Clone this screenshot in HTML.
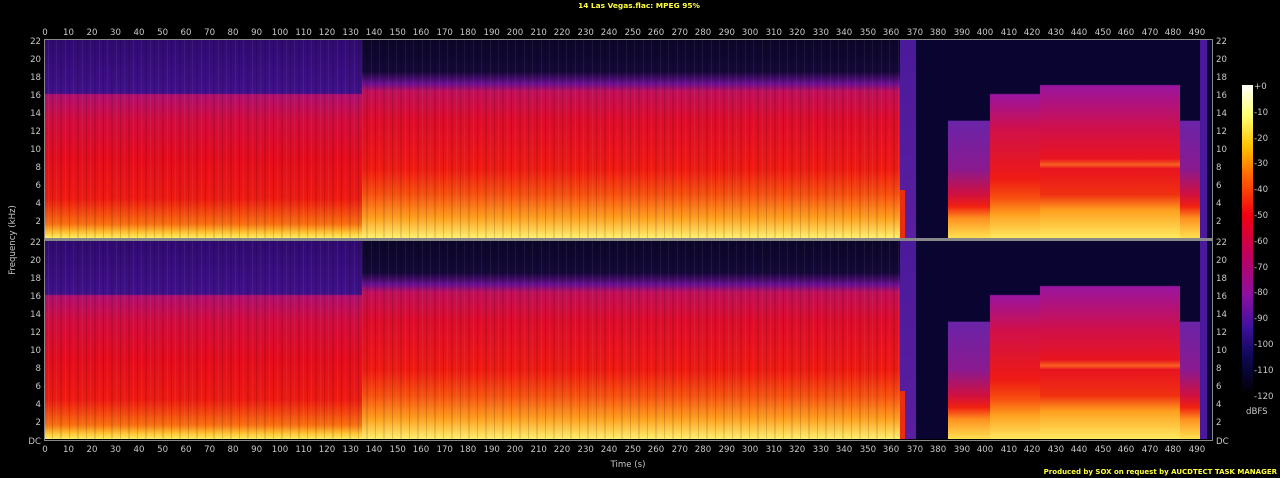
<!DOCTYPE html>
<html><head><meta charset="utf-8"><style>
html,body{margin:0;padding:0;background:#000;width:1280px;height:478px;overflow:hidden}
svg{display:block}
text{font-family:"DejaVu Sans","Liberation Sans",sans-serif;font-size:8.6px;fill:#c8c8c8}
</style></head><body>
<svg width="1280" height="478" viewBox="0 0 1280 478" xmlns="http://www.w3.org/2000/svg">
<defs>
<linearGradient id="gA" x1="0" y1="0" x2="0" y2="1">
<stop offset="0" stop-color="#300a70"/><stop offset="0.27" stop-color="#40108a"/>
<stop offset="0.275" stop-color="#b01070"/><stop offset="0.4" stop-color="#d00c40"/>
<stop offset="0.6" stop-color="#e40c1c"/><stop offset="0.8" stop-color="#ec1a12"/>
<stop offset="0.86" stop-color="#f24010"/><stop offset="0.93" stop-color="#f87010"/>
<stop offset="0.97" stop-color="#ffc030"/><stop offset="1" stop-color="#ffee60"/></linearGradient>
<linearGradient id="gB" x1="0" y1="0" x2="0" y2="1">
<stop offset="0" stop-color="#0c0628"/><stop offset="0.16" stop-color="#140838"/>
<stop offset="0.22" stop-color="#6a1090"/><stop offset="0.26" stop-color="#c0105a"/>
<stop offset="0.4" stop-color="#dc0c2c"/><stop offset="0.65" stop-color="#ee1a12"/>
<stop offset="0.78" stop-color="#f65010"/><stop offset="0.9" stop-color="#ffa020"/>
<stop offset="1" stop-color="#fff070"/></linearGradient>
<linearGradient id="gC" x1="0" y1="0" x2="0" y2="1">
<stop offset="0" stop-color="#4a1a9a"/><stop offset="1" stop-color="#5a1ea0"/></linearGradient>
<linearGradient id="gE" x1="0" y1="0" x2="0" y2="1">
<stop offset="0" stop-color="#0a0530"/><stop offset="0.405" stop-color="#0a0530"/>
<stop offset="0.41" stop-color="#6a24a8"/><stop offset="0.65" stop-color="#8a1a90"/>
<stop offset="0.78" stop-color="#d01040"/><stop offset="0.84" stop-color="#f02010"/>
<stop offset="0.9" stop-color="#ff9020"/><stop offset="1" stop-color="#ffe050"/></linearGradient>
<linearGradient id="gF" x1="0" y1="0" x2="0" y2="1">
<stop offset="0" stop-color="#0a0530"/><stop offset="0.27" stop-color="#0a0530"/>
<stop offset="0.275" stop-color="#9a14a0"/><stop offset="0.45" stop-color="#d0104a"/>
<stop offset="0.7" stop-color="#ee1a14"/><stop offset="0.8" stop-color="#f85010"/>
<stop offset="0.88" stop-color="#ffa020"/><stop offset="1" stop-color="#ffe860"/></linearGradient>
<linearGradient id="gG" x1="0" y1="0" x2="0" y2="1">
<stop offset="0" stop-color="#0a0530"/><stop offset="0.225" stop-color="#0a0530"/>
<stop offset="0.23" stop-color="#9a14a0"/><stop offset="0.45" stop-color="#d0104a"/>
<stop offset="0.6" stop-color="#e81420"/><stop offset="0.63" stop-color="#f86020"/>
<stop offset="0.65" stop-color="#e81420"/><stop offset="0.78" stop-color="#f03010"/>
<stop offset="0.86" stop-color="#ffa020"/><stop offset="1" stop-color="#ffea60"/></linearGradient>
<linearGradient id="gBar" x1="0" y1="0" x2="0" y2="1">
<stop offset="0" stop-color="#ffffff"/><stop offset="0.1" stop-color="#ffff70"/>
<stop offset="0.2" stop-color="#ffc000"/><stop offset="0.3" stop-color="#ff6000"/>
<stop offset="0.42" stop-color="#f00010"/><stop offset="0.55" stop-color="#c00060"/>
<stop offset="0.68" stop-color="#8a10a0"/><stop offset="0.78" stop-color="#4010a0"/>
<stop offset="0.87" stop-color="#10085a"/><stop offset="1" stop-color="#000000"/></linearGradient>
<pattern id="stripes" width="17" height="10" patternUnits="userSpaceOnUse">
<rect x="1" width="1" height="10" fill="#000" opacity="0.15"/>
<rect x="5" width="1" height="10" fill="#fff" opacity="0.05"/>
<rect x="9" width="2" height="10" fill="#000" opacity="0.1"/>
<rect x="14" width="1" height="10" fill="#fff" opacity="0.06"/>
</pattern>
<g id="ch">
<rect x="45" y="0" width="317" height="198" fill="url(#gA)"/>
<rect x="362" y="0" width="538" height="198" fill="url(#gB)"/>
<rect x="900" y="0" width="16" height="198" fill="url(#gC)"/>
<rect x="900" y="150" width="5" height="48" fill="#e83010"/>
<rect x="916" y="0" width="32" height="198" fill="#0a0530"/>
<rect x="948" y="0" width="42" height="198" fill="url(#gE)"/>
<rect x="990" y="0" width="50" height="198" fill="url(#gF)"/>
<rect x="1040" y="0" width="140" height="198" fill="url(#gG)"/>
<rect x="1180" y="0" width="20" height="198" fill="url(#gE)"/>
<rect x="1200" y="0" width="7" height="198" fill="#4a1a9a"/>
<rect x="1207" y="0" width="6" height="198" fill="#0a0530"/>
<rect x="45" y="0" width="855" height="198" fill="url(#stripes)"/>
</g>
</defs>
<rect x="44" y="39" width="1169" height="402" fill="#000"/>
<use href="#ch" transform="translate(0,40)"/>
<use href="#ch" transform="translate(0,241)"/>
<rect x="44" y="238" width="1169" height="3" fill="#888"/>
<rect x="44.5" y="39.5" width="1168" height="401" fill="none" stroke="#888"/>
<text x="639" y="8" text-anchor="middle" style="fill:#ffff40;font-weight:bold;font-size:7.4px">14 Las Vegas.flac: MPEG 95%</text>
<g text-anchor="middle">
<g transform="translate(0,35)">
<text x="45">0</text><text x="68.5">10</text><text x="92">20</text><text x="115.5">30</text><text x="139">40</text><text x="162.6">50</text><text x="186">60</text><text x="209.6">70</text><text x="233">80</text><text x="256.6">90</text><text x="280">100</text><text x="303.6">110</text><text x="327">120</text><text x="350.6">130</text><text x="374">140</text><text x="397.7">150</text><text x="421">160</text><text x="444.7">170</text><text x="468">180</text><text x="491.7">190</text><text x="515">200</text><text x="538.7">210</text><text x="562">220</text><text x="585.7">230</text><text x="609">240</text><text x="632.8">250</text><text x="656">260</text><text x="679.8">270</text><text x="703">280</text><text x="726.8">290</text><text x="750">300</text><text x="773.8">310</text><text x="797">320</text><text x="820.8">330</text><text x="844">340</text><text x="867.9">350</text><text x="891">360</text><text x="914.9">370</text><text x="938">380</text><text x="961.9">390</text><text x="985">400</text><text x="1008.9">410</text><text x="1032">420</text><text x="1055.9">430</text><text x="1079">440</text><text x="1103">450</text><text x="1126">460</text><text x="1150">470</text><text x="1173">480</text><text x="1197">490</text>
</g>
<g transform="translate(0,452)">
<text x="45">0</text><text x="68.5">10</text><text x="92">20</text><text x="115.5">30</text><text x="139">40</text><text x="162.6">50</text><text x="186">60</text><text x="209.6">70</text><text x="233">80</text><text x="256.6">90</text><text x="280">100</text><text x="303.6">110</text><text x="327">120</text><text x="350.6">130</text><text x="374">140</text><text x="397.7">150</text><text x="421">160</text><text x="444.7">170</text><text x="468">180</text><text x="491.7">190</text><text x="515">200</text><text x="538.7">210</text><text x="562">220</text><text x="585.7">230</text><text x="609">240</text><text x="632.8">250</text><text x="656">260</text><text x="679.8">270</text><text x="703">280</text><text x="726.8">290</text><text x="750">300</text><text x="773.8">310</text><text x="797">320</text><text x="820.8">330</text><text x="844">340</text><text x="867.9">350</text><text x="891">360</text><text x="914.9">370</text><text x="938">380</text><text x="961.9">390</text><text x="985">400</text><text x="1008.9">410</text><text x="1032">420</text><text x="1055.9">430</text><text x="1079">440</text><text x="1103">450</text><text x="1126">460</text><text x="1150">470</text><text x="1173">480</text><text x="1197">490</text>
</g>
</g>
<g text-anchor="end">
<text x="41" y="44">22</text><text x="41" y="62">20</text><text x="41" y="80">18</text><text x="41" y="98">16</text><text x="41" y="116">14</text><text x="41" y="134">12</text><text x="41" y="152">10</text><text x="41" y="170">8</text><text x="41" y="188">6</text><text x="41" y="206">4</text><text x="41" y="224">2</text>
<text x="41" y="245">22</text><text x="41" y="263">20</text><text x="41" y="281">18</text><text x="41" y="299">16</text><text x="41" y="317">14</text><text x="41" y="335">12</text><text x="41" y="353">10</text><text x="41" y="371">8</text><text x="41" y="389">6</text><text x="41" y="407">4</text><text x="41" y="425">2</text><text x="41" y="444">DC</text>
</g>
<g>
<text x="1216" y="44">22</text><text x="1216" y="62">20</text><text x="1216" y="80">18</text><text x="1216" y="98">16</text><text x="1216" y="116">14</text><text x="1216" y="134">12</text><text x="1216" y="152">10</text><text x="1216" y="170">8</text><text x="1216" y="188">6</text><text x="1216" y="206">4</text><text x="1216" y="224">2</text>
<text x="1216" y="245">22</text><text x="1216" y="263">20</text><text x="1216" y="281">18</text><text x="1216" y="299">16</text><text x="1216" y="317">14</text><text x="1216" y="335">12</text><text x="1216" y="353">10</text><text x="1216" y="371">8</text><text x="1216" y="389">6</text><text x="1216" y="407">4</text><text x="1216" y="425">2</text><text x="1216" y="444">DC</text>
</g>
<text transform="translate(15,240) rotate(-90)" text-anchor="middle">Frequency (kHz)</text>
<text x="628" y="467" text-anchor="middle">Time (s)</text>
<rect x="1242" y="85" width="11" height="310" fill="url(#gBar)"/>
<g>
<text x="1254" y="89">+0</text><text x="1254" y="115">-10</text><text x="1254" y="141">-20</text><text x="1254" y="166">-30</text><text x="1254" y="192">-40</text><text x="1254" y="218">-50</text><text x="1254" y="244">-60</text><text x="1254" y="270">-70</text><text x="1254" y="295">-80</text><text x="1254" y="321">-90</text><text x="1254" y="347">-100</text><text x="1254" y="373">-110</text><text x="1254" y="399">-120</text>
</g>
<text x="1246" y="414">dBFS</text>
<text x="1277" y="474" text-anchor="end" style="fill:#ffff40;font-weight:bold;font-size:7px">Produced by SOX on request by AUCDTECT TASK MANAGER</text>
</svg>
</body></html>
